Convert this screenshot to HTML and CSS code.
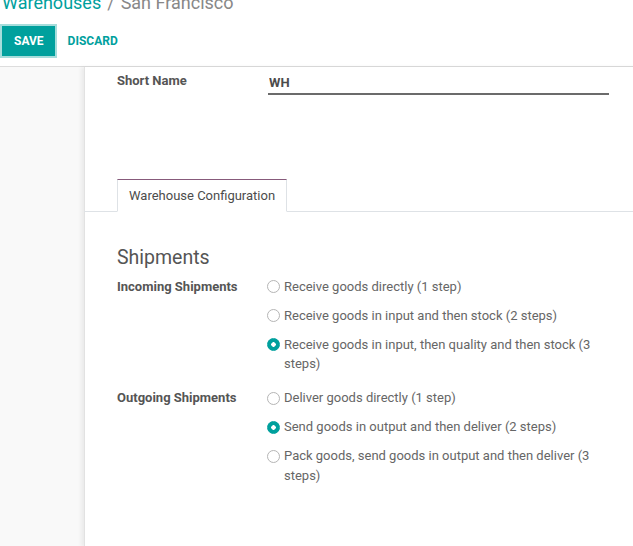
FILE: index.html
```html
<html>
<head>
    <link rel="stylesheet" href="styles.css">
</head>
<body>
    <div class="control-panel">
        <ol class="breadcrumb">
            <li><a href="#">Warehouses</a></li>
            <li class="active">San Francisco</li>
        </ol>
        <div class="cp-buttons">
            <button class="btn btn-save">Save</button>
            <button class="btn btn-discard">Discard</button>
        </div>
    </div>

    <div class="form-view">
        <div class="sheet">
            <div class="group short-name">
                <label class="field-label" for="code">Short Name</label>
                <input class="field-input" id="code" type="text" value="WH">
            </div>

            <div class="notebook">
                <ul class="nav-tabs">
                    <li><a class="active" href="#">Warehouse Configuration</a></li>
                </ul>
                <div class="tab-pane">
                    <div class="separator">Shipments</div>
                    <div class="group">
                        <div class="field-label">Incoming Shipments</div>
                        <div class="radio-list">
                            <label class="radio-item"><input type="radio" name="reception"><span>Receive goods directly (1 step)</span></label>
                            <label class="radio-item"><input type="radio" name="reception"><span>Receive goods in input and then stock (2 steps)</span></label>
                            <label class="radio-item"><input type="radio" name="reception" checked><span>Receive goods in input, then quality and then stock (3 steps)</span></label>
                        </div>

                        <div class="field-label">Outgoing Shipments</div>
                        <div class="radio-list">
                            <label class="radio-item"><input type="radio" name="delivery"><span>Deliver goods directly (1 step)</span></label>
                            <label class="radio-item"><input type="radio" name="delivery" checked><span>Send goods in output and then deliver (2 steps)</span></label>
                            <label class="radio-item"><input type="radio" name="delivery"><span>Pack goods, send goods in output and then deliver (3 steps)</span></label>
                        </div>
                    </div>
                </div>
            </div>
        </div>
    </div>
</body>
</html>
```

FILE: styles.css
```css
body {
    margin: 0;
    background-color: #fff;
    color: #4c4c4c;
    font-family: Roboto, "Liberation Sans", sans-serif;
    font-size: 13px;
    line-height: 19.5px;
    overflow: hidden;
    height: 546px;
}

/* top bar */
.control-panel {
    margin-top: -9px;
    padding: 0 0 10px 2px;
    border-bottom: 1px solid #ddd;
}

.breadcrumb {
    list-style: none;
    margin: 0;
    padding: 0;
    display: flex;
    font-size: 18px;
    line-height: 24px;
}

.breadcrumb a {
    color: #00a09d;
    text-decoration: none;
}

.breadcrumb li.active {
    color: #888;
}

.breadcrumb li.active::before {
    content: "/";
    padding: 0 6px;
    color: #888;
}

.cp-buttons {
    display: flex;
    margin-top: 11px;
}

.btn {
    height: 30px;
    border: none;
    font-family: inherit;
    font-size: 12px;
    font-weight: bold;
    text-transform: uppercase;
    cursor: pointer;
}

.btn-save {
    padding: 0 11px 0 12px;
    background-color: #00a09d;
    color: #fff;
    box-shadow: 0 0 0 2px #a6dddb;
}

.btn-discard {
    margin-left: 1px;
    padding: 0 12px;
    background: none;
    color: #00a09d;
}

/* form */
.form-view {
    background-color: #f9f9f9;
    height: 480px;
}

.sheet {
    margin-left: 84px;
    width: 600px;
    height: 100%;
    padding: 4px 0 0 32px;
    box-sizing: border-box;
    background-color: #fff;
    border-left: 1px solid #e2e2e2;
    box-shadow: -3px 0 4px rgba(0, 0, 0, 0.06);
}

.group {
    display: grid;
    grid-template-columns: 151px 341px;
    align-items: start;
}

.field-label {
    font-weight: bold;
    color: #555;
}

.field-input {
    padding: 2px 0 0 1px;
    border: none;
    border-bottom: 2px solid #6b6b6b;
    font-family: inherit;
    font-size: 13px;
    font-weight: bold;
    line-height: 19.5px;
    color: #4c4c4c;
    outline: none;
}

/* notebook */
.notebook {
    margin-top: 84px;
}

.nav-tabs {
    list-style: none;
    margin: 0 0 0 -33px;
    padding: 0 0 0 33px;
    display: flex;
    border-bottom: 1px solid #dee2e6;
}

.nav-tabs a {
    display: block;
    margin-bottom: -1px;
    padding: 6px 11px;
    line-height: 19px;
    color: #4c4c4c;
    text-decoration: none;
    background-color: #fff;
    border: 1px solid #dee2e6;
    border-top-color: #875a7b;
    border-bottom-color: #fff;
}

.separator {
    margin: 33px 0 6px;
    font-size: 19.5px;
    line-height: 26px;
    color: #555;
}

.radio-list {
    display: flex;
    flex-direction: column;
    gap: 9.5px;
    padding-bottom: 14.5px;
    color: #666;
}

.radio-item {
    display: flex;
    align-items: flex-start;
    gap: 4px;
    cursor: pointer;
}

.radio-item input {
    appearance: none;
    flex: none;
    width: 13px;
    height: 13px;
    margin: 3.5px 0 0 -1px;
    border: 1px solid #b5b5b5;
    border-radius: 50%;
    background-color: #fff;
    box-sizing: border-box;
}

.radio-item input:checked {
    border-color: #00a09d;
    background: radial-gradient(circle, #fff 0 2px, #00a09d 2.5px);
}
```
